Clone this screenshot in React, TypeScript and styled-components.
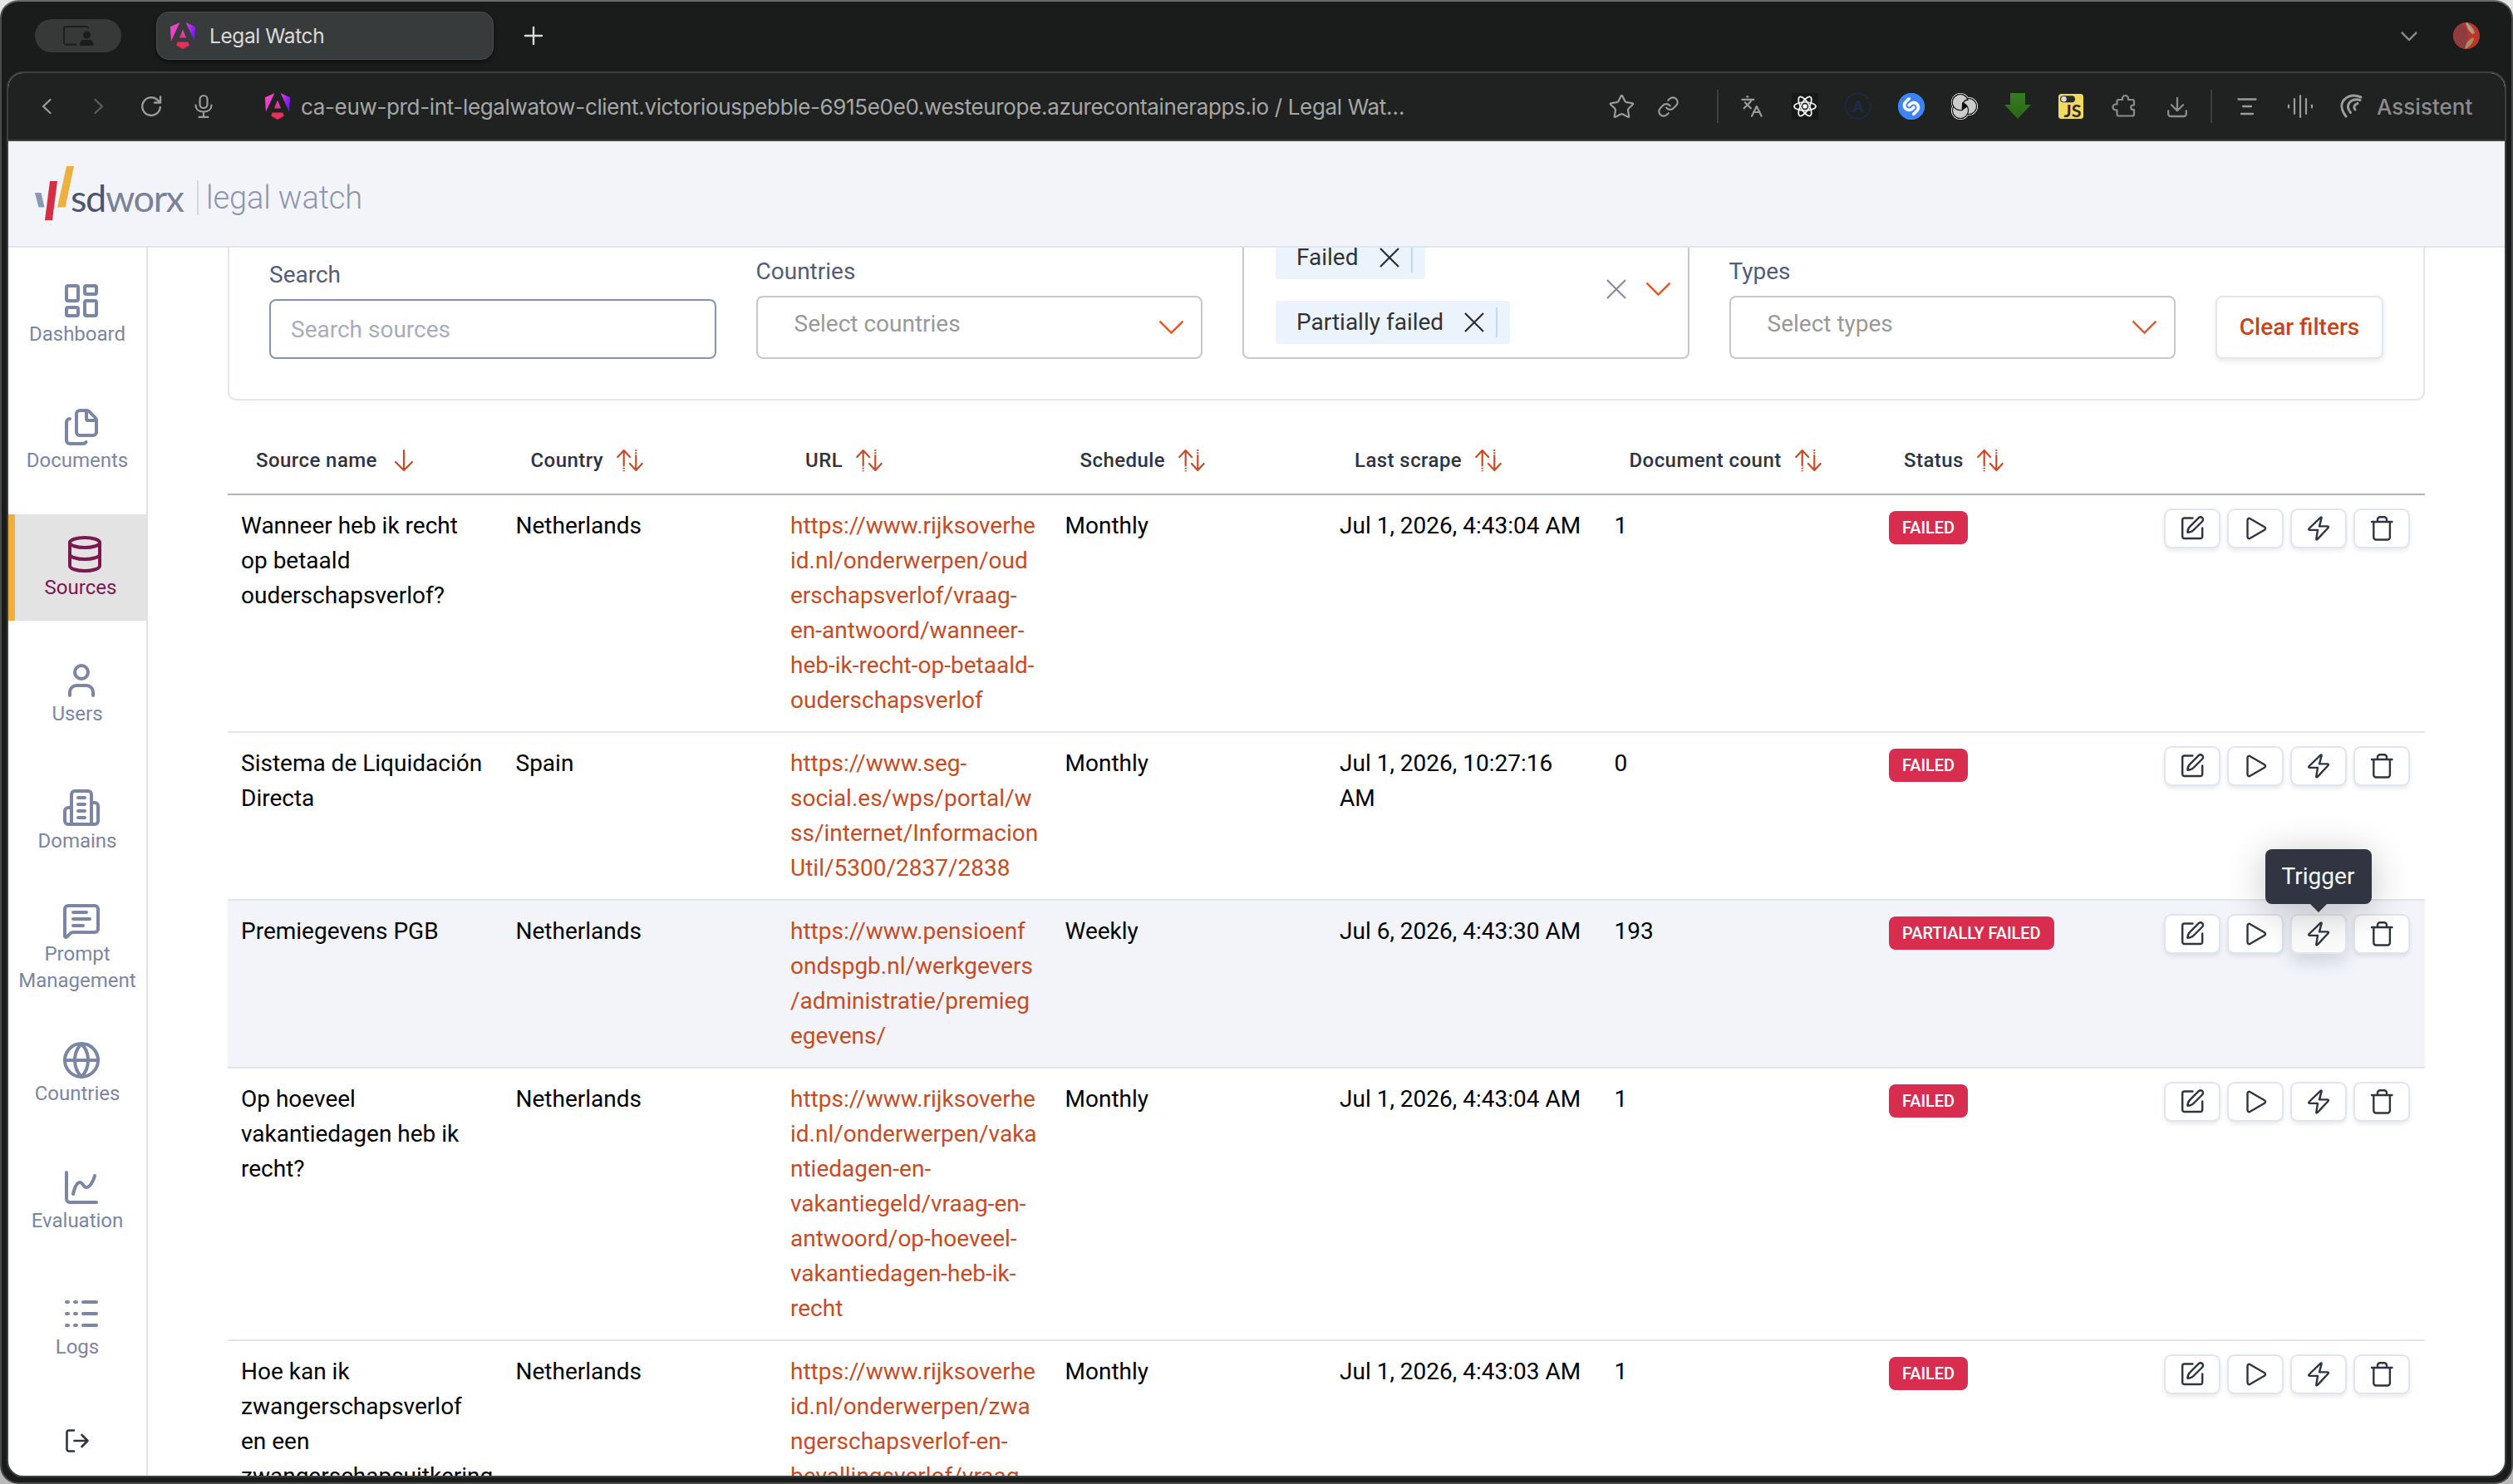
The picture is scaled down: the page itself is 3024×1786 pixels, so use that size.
import type { ReactNode } from "react";
import styled, { createGlobalStyle } from "styled-components";
import {
    ChartSpline,
    Database,
    Files,
    Globe,
    Languages,
    LayoutDashboard,
    Link as LinkIcon,
    Logs,
    MessageSquareText,
    Star,
    User,
} from "lucide-react";
import { SiShazam } from "react-icons/si";

const GlobalStyle = createGlobalStyle`
    * {
        box-sizing: border-box;
    }

    body {
        margin: 0;
        background: linear-gradient(#e4e6e5, #b9b9b9);
        font-family: Roboto, "Liberation Sans", sans-serif;
        font-size: 28px;
        line-height: 42px;
        color: #000;
    }
`;

/* ---------- Browser window ---------- */

const BrowserWindow = styled.div`
    width: 3024px;
    height: 1786px;
    display: flex;
    flex-direction: column;
    overflow: hidden;
    background: #1a1c1b;
    border: 2px solid #4a4c4b;
    border-top-color: #686b6a;
    border-radius: 22px;
    font-family: Inter, "Liberation Sans", sans-serif;
`;

const TabStrip = styled.div`
    flex: none;
    height: 84px;
    padding: 0 38px 2px 40px;
    display: flex;
    align-items: center;
`;

const ProfilePill = styled.div`
    width: 104px;
    height: 40px;
    border-radius: 20px;
    background: #373939;
    display: flex;
    align-items: center;
    justify-content: center;
`;

const Tab = styled.div`
    width: 406px;
    height: 58px;
    margin: 0 36px 0 42px;
    padding-left: 15px;
    display: flex;
    align-items: center;
    gap: 16px;
    border: 1px solid #4b4e4f;
    border-radius: 15px;
    background: #383b3c;
    box-shadow: 0 2px 5px rgba(0, 0, 0, 0.5);
    color: #d9dad9;
    font-size: 24.5px;
    letter-spacing: -0.4px;
`;

const StripEnd = styled.div`
    margin-left: auto;
    display: flex;
    align-items: center;
    gap: 43px;
`;

const Frame = styled.div`
    flex: 1;
    min-height: 0;
    margin: 0 6px 6px;
    display: flex;
    flex-direction: column;
    overflow: hidden;
    border: 2px solid #3e4040;
    border-radius: 20px;
    background: #fff;
`;

const Toolbar = styled.div`
    flex: none;
    height: 82px;
    padding: 0 38px 0 14px;
    display: flex;
    align-items: center;
    background: #202221;
    border-bottom: 2px solid #414244;
    color: #a5a7a6;
    font-size: 26px;
`;

const IconCell = styled.div<{ $width: number; $color?: string }>`
    flex: none;
    width: ${({ $width }) => $width}px;
    display: flex;
    align-items: center;
    justify-content: center;
    color: ${({ $color }) => $color ?? "#9a9c9b"};
`;

const Address = styled.div`
    margin-left: 42px;
    margin-right: auto;
    display: flex;
    align-items: center;
    gap: 12px;
    white-space: nowrap;
`;

const AddressText = styled.span`
    padding-top: 2px;
    letter-spacing: -0.35px;
`;

const ToolDivider = styled.div<{ $before: number; $after: number }>`
    width: 2px;
    height: 40px;
    margin-left: ${({ $before }) => $before}px;
    margin-right: ${({ $after }) => $after}px;
    background: #3d3f3f;
`;

const AssistLabel = styled.span`
    width: 116px;
    padding-top: 2px;
    color: #8b8d8c;
    font-weight: 500;
    white-space: nowrap;
`;

/* ---------- App shell ---------- */

const Page = styled.div`
    flex: 1;
    min-height: 0;
    display: flex;
    flex-direction: column;
    font-family: Roboto, "Liberation Sans", sans-serif;
`;

const Header = styled.header`
    flex: none;
    height: 128px;
    padding-left: 32px;
    display: flex;
    align-items: center;
    background: #f2f4f9;
    border-bottom: 2px solid #e1e5ec;
`;

const Brand = styled.div`
    display: flex;
    align-items: center;
    margin-top: 9px;
`;

const BrandName = styled.span`
    width: 137px;
    margin-left: -5px;
    font-family: Lato, "Liberation Sans", sans-serif;
    font-size: 45px;
    letter-spacing: -1.4px;
    color: #7b8196;
`;

const BrandStrong = styled.span`
    color: #4d546e;
`;

const BrandProduct = styled.span`
    margin-left: 15px;
    padding-left: 9px;
    border-left: 2px solid #d6d8da;
    font-size: 38px;
    font-weight: 300;
    color: #8f95a9;
    letter-spacing: -0.1px;
`;

const Body = styled.div`
    flex: 1;
    min-height: 0;
    display: flex;
`;

const Sidebar = styled.nav`
    flex: none;
    width: 168px;
    padding-top: 16px;
    display: flex;
    flex-direction: column;
    gap: 24.4px;
    border-right: 2px solid #e3e3e3;
    overflow: hidden;
`;

const NavItem = styled.a<{ $active?: boolean }>`
    flex: none;
    height: 128px;
    display: flex;
    flex-direction: column;
    align-items: center;
    justify-content: center;
    border-left: ${({ $active }) => ($active ? "8px solid #eeaf3f" : "none")};
    background: ${({ $active }) => ($active ? "#e3e3e3" : "transparent")};
    color: ${({ $active }) => ($active ? "#7c1750" : "#7a86a4")};
    font-size: 24px;
    line-height: 32px;
    text-align: center;

    svg {
        margin-left: 10px;
    }
`;

const Logout = styled.div`
    margin-top: 32px;
    display: flex;
    justify-content: center;
`;

const Main = styled.main`
    flex: 1;
    min-width: 0;
    padding: 0 96px;
    overflow: hidden;
`;

/* ---------- Filters ---------- */

const FilterPanel = styled.section`
    height: 184px;
    padding: 0 48px 48px;
    display: grid;
    grid-template-columns: repeat(4, minmax(0, 1fr)) 202px;
    align-items: end;
    align-content: end;
    column-gap: 48px;
    overflow: hidden;
    border: 2px solid #e1e5ec;
    border-top: none;
    border-radius: 0 0 10px 10px;
`;

const Field = styled.div`
    display: flex;
    flex-direction: column;
    gap: 8px;
    color: #545c78;
`;

const SearchBox = styled.div`
    height: 72px;
    padding: 1px 0 0 24px;
    display: flex;
    align-items: center;
    border: 2px solid #8593b2;
    border-radius: 8px;
    color: #a8adbc;
`;

const SelectBox = styled.div`
    height: 76px;
    padding: 0 20px 0 44px;
    display: flex;
    align-items: center;
    justify-content: space-between;
    border: 2px solid #c8c8c8;
    border-radius: 8px;
    color: #999;
`;

const SelectHint = styled.span`
    margin-bottom: 8px;
`;

const MultiSelect = styled.div`
    height: 168px;
    padding: 0 20px 0 38px;
    display: flex;
    align-items: center;
    gap: 23px;
    border: 2px solid #c8c8c8;
    border-radius: 8px;
`;

const ChipList = styled.div`
    flex: 1;
    display: flex;
    flex-direction: column;
    align-items: flex-start;
    gap: 26px;
    padding-top: 2px;
`;

const Chip = styled.div`
    height: 52px;
    padding: 0 15px 0 25px;
    display: flex;
    align-items: center;
    gap: 25px;
    border-radius: 4px;
    background: #ebf3fd;
    color: #333;
`;

const ChipEnd = styled.span`
    height: 36px;
    padding-right: 14px;
    display: flex;
    align-items: center;
    border-right: 2px solid #bcd9f7;
`;

const ClearButton = styled.button`
    height: 76px;
    padding: 0;
    border: 2px solid #e1e5ee;
    border-radius: 8px;
    background: #fff;
    box-shadow: 0 3px 6px rgba(40, 50, 80, 0.1);
    color: #c5451c;
    font: 500 28px/42px Roboto, "Liberation Sans", sans-serif;
    white-space: nowrap;
`;

/* ---------- Table ---------- */

const Table = styled.div`
    margin-top: 32px;
`;

const Columns = styled.div`
    display: grid;
    grid-template-columns: repeat(8, minmax(0, 1fr));
`;

const HeadRow = styled(Columns)`
    height: 82px;
    align-items: center;
    border-bottom: 2px solid #abb3c4;
`;

const HeadCell = styled.div`
    padding-left: 34px;
    display: flex;
    align-items: center;
    gap: 16px;
    color: #2f3441;
    font-size: 24px;
    font-weight: 500;
    letter-spacing: 0.43px;
    white-space: nowrap;
`;

const Row = styled(Columns)<{ $hovered?: boolean }>`
    border-bottom: 2px solid #e1e5ec;
    background: ${({ $hovered }) => ($hovered ? "#f2f4f9" : "transparent")};
`;

const Cell = styled.div<{ $link?: boolean }>`
    padding: 16px;
    white-space: nowrap;
    color: ${({ $link }) => ($link ? "#c84b24" : "#000")};
`;

const Badge = styled.span`
    display: block;
    width: max-content;
    height: 40px;
    margin-top: 3px;
    padding: 0 16px;
    border-radius: 8px;
    background: #d92d4f;
    color: #fff;
    font-size: 20px;
    font-weight: 500;
    line-height: 40px;
    letter-spacing: -0.05px;
`;

const Actions = styled.div`
    display: flex;
    gap: 8px;
`;

const ActionButton = styled.div<{ $hovered?: boolean }>`
    position: relative;
    width: 68px;
    height: 48px;
    display: flex;
    align-items: center;
    justify-content: center;
    border: 2px solid #e1e5ee;
    border-radius: 9px;
    background: ${({ $hovered }) => ($hovered ? "#fbfbfc" : "#fff")};
    box-shadow: ${({ $hovered }) =>
        $hovered ? "0 10px 20px rgba(40, 50, 80, 0.16)" : "0 3px 5px rgba(40, 50, 80, 0.1)"};
    color: #2f3441;
`;

const Tooltip = styled.div`
    position: absolute;
    z-index: 2;
    bottom: 58px;
    left: 50%;
    transform: translateX(-50%);
    width: 128px;
    height: 66px;
    border-radius: 8px;
    background: #313541;
    box-shadow: 0 8px 48px rgba(0, 0, 0, 0.24);
    color: #fff;
    line-height: 66px;
    text-align: center;

    &::after {
        content: "";
        position: absolute;
        top: 100%;
        left: 54px;
        border: 10px solid transparent;
        border-top-color: #313541;
    }
`;

/* ---------- Icons ---------- */

interface StrokeProps {
    width?: number;
    height?: number;
    stroke?: number;
    color?: string;
    children: ReactNode;
}

const Stroke = ({ width = 32, height = 32, stroke = 2.4, color = "currentColor", children }: StrokeProps) => (
    <svg
        width={width}
        height={height}
        viewBox={`0 0 ${width} ${height}`}
        fill="none"
        stroke={color}
        strokeWidth={stroke}
        strokeLinecap="round"
        strokeLinejoin="round"
    >
        {children}
    </svg>
);

const AngularLogo = ({ id }: { id: string }) => (
    <svg width="32" height="32" viewBox="0 0 24 24">
        <defs>
            <linearGradient id={`${id}-top`} gradientUnits="userSpaceOnUse" x1="2" y1="6" x2="23" y2="14">
                <stop offset="0" stopColor="#f044c4" />
                <stop offset="0.5" stopColor="#d93adf" />
                <stop offset="1" stopColor="#5f14f2" />
            </linearGradient>
            <linearGradient id={`${id}-low`} gradientUnits="userSpaceOnUse" x1="8" y1="24" x2="15" y2="8">
                <stop offset="0" stopColor="#f02e3c" />
                <stop offset="0.5" stopColor="#e0316f" />
                <stop offset="1" stopColor="#e83ccf" />
            </linearGradient>
        </defs>
        <path
            fill={`url(#${id}-top)`}
            d="M14.692 0l7.832 16.855.814-12.856L14.692 0ZM9.308 0 .662 3.999l.814 12.856L9.308 0Z"
        />
        <path
            fill={`url(#${id}-low)`}
            d="M16.712 17.711H7.288l-1.204 2.916L12 24l5.916-3.373-1.204-2.916ZM8.903 13.93h6.198L12 6.396 8.903 13.93Z"
        />
    </svg>
);

const ProfileIcon = () => (
    <svg width="38" height="26" viewBox="0 0 38 26">
        <path d="M17 23.5H4.5A2.5 2.5 0 0 1 2 21V4.500A2.500 2.500 0 0 1 4.500 2h24A2.500 2.500 0 0 1 31 4.500" fill="none" stroke="#1b1d1c" strokeWidth="1.800" />
        <circle cx="29.500" cy="12" r="4.500" fill="#1b1d1c" />
        <path d="M21 25v-2a5 5 0 0 1 5-5h6.500a5 5 0 0 1 5 5v2z" fill="#1b1d1c" />
    </svg>
);

const Avatar = () => (
    <svg width="32" height="32" viewBox="0 0 32 32">
        <defs>
            <clipPath id="avatar">
                <circle cx="16" cy="16" r="16" />
            </clipPath>
        </defs>
        <g clipPath="url(#avatar)">
            <rect width="32" height="32" fill="#b8362c" />
            <path d="M2 6C8 0 14 2 17 10c2 6-1 14-3 22H4C-1 24-2 12 2 6z" fill="#8f3b40" />
            <path d="M15 0c1 6 4 11 8 14l3-1C25 7 20 2 15 0z" fill="#c98a62" />
            <path d="M16.500 0c2 5 4 9 7 12" stroke="#7fb6b4" strokeWidth="1.600" fill="none" />
            <path d="M14 32c1-7 4-11 10-14l1 2c-2 6-6 10-11 12z" fill="#b98848" />
            <path d="M15.500 31c2-5 4-8 7-11" stroke="#7c9b95" strokeWidth="1.600" fill="none" />
        </g>
    </svg>
);

const SdWorxMark = () => (
    <svg width="48" height="66" viewBox="0 0 48 66">
        <path d="M0 32h7.500l4 17.500h-7z" fill="#8a97b6" />
        <path d="M18 18h9l-6 47h-9z" fill="#d62f45" />
        <path d="M38 0h9L36.500 49.500H27z" fill="#eeb03f" />
    </svg>
);

const MicIcon = () => (
    <Stroke stroke={2.2}>
        <rect x="11.500" y="3" width="9" height="15" rx="4.500" />
        <path d="M6.500 14.500c0 5 4 8 9.500 8s9.500-3 9.500-8M16 22.500v6M10.500 28.800h11" />
    </Stroke>
);

const ReloadIcon = () => (
    <Stroke stroke={2.4}>
        <path d="M26.800 17a10.800 10.800 0 1 1-3.600-9l3.400 3.300" />
        <path d="M27 4.500v7h-7" />
    </Stroke>
);

const ReactIcon = () => (
    <svg width="32" height="32" viewBox="0 0 32 32" fill="none" stroke="#f4f4f4" strokeWidth="1.700">
        <rect width="32" height="32" fill="#171918" stroke="none" />
        <circle cx="16" cy="16" r="2.800" fill="#f4f4f4" stroke="none" />
        <ellipse cx="16" cy="16" rx="13" ry="5" />
        <ellipse cx="16" cy="16" rx="13" ry="5" transform="rotate(60 16 16)" />
        <ellipse cx="16" cy="16" rx="13" ry="5" transform="rotate(120 16 16)" />
    </svg>
);

const ApolloIcon = () => (
    <svg width="32" height="32" viewBox="0 0 32 32">
        <path d="M30 10.500A15.200 15.200 0 1 1 26 4.500" fill="none" stroke="#1b2c4c" strokeWidth="1.400" />
        <circle cx="27" cy="5.500" r="1.700" fill="#1b2c4c" />
        <text x="16" y="23" fontSize="19" fontWeight="700" textAnchor="middle" fill="#1b2c4c">
            A
        </text>
    </svg>
);

const ShazamDisc = styled.span`
    display: flex;
    border-radius: 50%;
    background: radial-gradient(#fff 68%, #3c84f5 69%);
    color: #3c84f5;
`;

const ShazamIcon = () => (
    <ShazamDisc>
        <SiShazam size={32} />
    </ShazamDisc>
);

const TrioIcon = () => (
    <svg width="32" height="32" viewBox="0 0 32 32">
        <g fill="#fff">
            <circle cx="11" cy="11" r="11" />
            <circle cx="21" cy="16" r="11" />
            <circle cx="11" cy="21" r="11" />
        </g>
        <g fill="#cbcbcb" stroke="#1a1a1a" strokeWidth="1.300">
            <circle cx="11" cy="11" r="9.600" />
            <circle cx="21" cy="16" r="9.600" />
            <circle cx="11" cy="21" r="9.600" />
            <path d="M13.500 20.300A9.600 9.600 0 1 1 20 8c-4 0-7.500 4-6.500 12.300z" />
        </g>
        <path d="M13 11v10l7-5z" fill="#0c0c0c" />
    </svg>
);

const GreenArrow = () => (
    <svg width="32" height="32" viewBox="0 0 32 32">
        <defs>
            <linearGradient id="green" x1="0" y1="0" x2="0" y2="1">
                <stop offset="0" stopColor="#367c20" />
                <stop offset="1" stopColor="#2c6418" />
            </linearGradient>
        </defs>
        <path d="M7 0h18v14h7L16 31 0 14h7z" fill="url(#green)" />
    </svg>
);

const JsIcon = () => (
    <svg width="32" height="32" viewBox="0 0 32 32">
        <rect x="1" y="1" width="30" height="30" rx="3.500" fill="#f0db5e" />
        <rect x="3" y="3.300" width="18" height="8" rx="4" fill="#2b2b2b" />
        <circle cx="7.500" cy="7.300" r="3.300" fill="#d9dde0" />
        <text x="7.500" y="28.500" fontSize="20" fontWeight="700" textLength="21" lengthAdjust="spacingAndGlyphs" fill="#2a2a2a" fontFamily="Lato">
            JS
        </text>
    </svg>
);

const PuzzleIcon = () => (
    <Stroke stroke={2.2}>
        <path d="M7.500 13.500V10a2 2 0 0 1 2-2H14V6.500a3.500 3.500 0 0 1 7 0V8h5a2 2 0 0 1 2 2v4.500h-1a2.800 2.800 0 0 0 0 5.600h1V25.500a2 2 0 0 1-2 2H9.500a2 2 0 0 1-2-2v-5H6a3.400 3.400 0 0 1 0-7z" />
    </Stroke>
);

const DownloadIcon = () => (
    <Stroke stroke={2.3}>
        <path d="M16 6v15M9 14.300l7 7 7-7M5.200 21.500V25a3 3 0 0 0 3 3h15.600a3 3 0 0 0 3-3v-3.500" />
    </Stroke>
);

const ReaderIcon = () => (
    <Stroke stroke={2.3}>
        <path d="M5.500 7.500h21M11 16h10M9 25h14" />
    </Stroke>
);

const WaveIcon = () => (
    <Stroke stroke={2.2}>
        <path d="M2 14.500v3M9 7v18M16 3v26M23 7v18M30 14.500v3" />
    </Stroke>
);

const AssistIcon = () => (
    <Stroke stroke={3}>
        <path d="M9 28C3 20 2 12 8 7c5-4.500 12-5 19-2" />
        <path d="M14.500 23.500c-4-5-4-9-1-12.500 3-3 7.500-4 12.500-2.500" />
        <path d="M20 20c-2-3.500-1.500-6 3-7.500" />
    </Stroke>
);

const ChevronDown = ({ width = 31, color = "#df592b" }: { width?: number; color?: string }) => (
    <svg width={width} height={width * 0.55} viewBox="0 0 31 17" fill="none" stroke={color} strokeWidth={width < 31 ? 3.8 : 2.5}>
        <path d="M1.500 1.500l14 14 14-14" />
    </svg>
);

const Cross = ({ color = "#2d2d2d" }: { color?: string }) => (
    <svg width="24" height="24" viewBox="0 0 24 24" stroke={color} strokeWidth="2.200">
        <path d="M1 1l22 22M23 1L1 23" />
    </svg>
);

const BuildingIcon = ({ size = 48 }: { size?: number }) => (
    <svg width={size} height={size} viewBox="0 0 24 24" fill="none" stroke="currentColor" strokeWidth="2" strokeLinecap="round" strokeLinejoin="round">
        <path d="M6 22V4a2 2 0 0 1 2-2h8a2 2 0 0 1 2 2v18Z" />
        <path d="M6 12H4a2 2 0 0 0-2 2v6a2 2 0 0 0 2 2h2" />
        <path d="M18 9h2a2 2 0 0 1 2 2v9a2 2 0 0 1-2 2h-2" />
        <path d="M10 6h4M10 10h4M10 14h4M10 18h4" />
    </svg>
);

const SortDown = () => (
    <Stroke stroke={2.2} color="#c84b24">
        <path d="M16 4v23.500M6 18l10 10 10-10" />
    </Stroke>
);

const SortBoth = () => (
    <Stroke stroke={2.2} color="#c84b24">
        <path d="M8.700 22.500V4M1.300 12l7.400-8 7.400 8" />
        <path d="M8.700 24.700v4.500" strokeDasharray="1.800 1.500" strokeLinecap="butt" />
        <path d="M23.300 10v18M15.900 20l7.400 8 7.400-8" />
        <path d="M23.300 3v5.500" strokeDasharray="1.800 1.500" strokeLinecap="butt" />
    </Stroke>
);

const EditIcon = () => (
    <Stroke stroke={2.4}>
        <path d="M16.500 3.500H6.500a2.300 2.300 0 0 0-2.300 2.300v19.900A2.300 2.300 0 0 0 6.500 28h19.400a2.300 2.300 0 0 0 2.300-2.300V15.500" />
        <path d="M10.500 20.800c-.2-3 .8-5.200 2.800-7.200L23.800 3.200a3 3 0 0 1 4.300 4.300L17.500 18c-2 2-4 2.800-7 2.800z" />
    </Stroke>
);

const PlayIcon = () => (
    <Stroke stroke={2.4}>
        <path d="M6.500 6v20c0 1.800 1.700 2.700 3.200 1.800L27 17.700c1.400-.8 1.400-2.600 0-3.400L9.700 4.200C8.200 3.300 6.500 4.200 6.500 6z" />
    </Stroke>
);

const BoltIcon = () => (
    <Stroke stroke={2.4}>
        <path d="M18.600 2.700 4.700 16c-.9.900-.5 1.900.8 1.900H15l-1.700 10.500c-.1 1 .7 1.300 1.400.6L27.500 15.200c.8-.9.400-1.800-.8-1.800H17l2.600-10c.2-1-.4-1.300-1-.7z" />
    </Stroke>
);

const TrashIcon = () => (
    <Stroke stroke={2.4}>
        <path d="M4 8h24.500M11 7.500V5.300a3 3 0 0 1 3-3h5a3 3 0 0 1 3 3v2.200M6.300 8v18.700a2.800 2.800 0 0 0 2.800 2.800h14a2.800 2.800 0 0 0 2.800-2.800V8" />
    </Stroke>
);

const LogoutIcon = () => (
    <Stroke stroke={2.6} color="#2f3441">
        <path d="M12 3.500H6a2.500 2.500 0 0 0-2.500 2.500v20A2.500 2.500 0 0 0 6 28.500h6M12.500 16h16M21.500 9l7 7-7 7" />
    </Stroke>
);

/* ---------- Data ---------- */

const navItems = [
    { label: ["Dashboard"], icon: LayoutDashboard },
    { label: ["Documents"], icon: Files },
    { label: ["Sources"], icon: Database, active: true },
    { label: ["Users"], icon: User },
    { label: ["Domains"], icon: BuildingIcon },
    { label: ["Prompt", "Management"], icon: MessageSquareText },
    { label: ["Countries"], icon: Globe },
    { label: ["Evaluation"], icon: ChartSpline },
    { label: ["Logs"], icon: Logs },
];

const extensions = [ReactIcon, ApolloIcon, ShazamIcon, TrioIcon, GreenArrow, JsIcon, PuzzleIcon, DownloadIcon];

const headings = ["Source name", "Country", "URL", "Schedule", "Last scrape", "Document count", "Status"];

interface Source {
    name: string[];
    country: string;
    url: string[];
    schedule: string;
    lastScrape: string[];
    count: number;
    status: string;
    hovered?: boolean;
}

const sources: Source[] = [
    {
        name: ["Wanneer heb ik recht", "op betaald", "ouderschapsverlof?"],
        country: "Netherlands",
        url: [
            "https://www.rijksoverhe",
            "id.nl/onderwerpen/oud",
            "erschapsverlof/vraag-",
            "en-antwoord/wanneer-",
            "heb-ik-recht-op-betaald-",
            "ouderschapsverlof",
        ],
        schedule: "Monthly",
        lastScrape: ["Jul 1, 2026, 4:43:04 AM"],
        count: 1,
        status: "FAILED",
    },
    {
        name: ["Sistema de Liquidación", "Directa"],
        country: "Spain",
        url: ["https://www.seg-", "social.es/wps/portal/w", "ss/internet/Informacion", "Util/5300/2837/2838"],
        schedule: "Monthly",
        lastScrape: ["Jul 1, 2026, 10:27:16", "AM"],
        count: 0,
        status: "FAILED",
    },
    {
        name: ["Premiegevens PGB"],
        country: "Netherlands",
        url: ["https://www.pensioenf", "ondspgb.nl/werkgevers", "/administratie/premieg", "egevens/"],
        schedule: "Weekly",
        lastScrape: ["Jul 6, 2026, 4:43:30 AM"],
        count: 193,
        status: "PARTIALLY FAILED",
        hovered: true,
    },
    {
        name: ["Op hoeveel", "vakantiedagen heb ik", "recht?"],
        country: "Netherlands",
        url: [
            "https://www.rijksoverhe",
            "id.nl/onderwerpen/vaka",
            "ntiedagen-en-",
            "vakantiegeld/vraag-en-",
            "antwoord/op-hoeveel-",
            "vakantiedagen-heb-ik-",
            "recht",
        ],
        schedule: "Monthly",
        lastScrape: ["Jul 1, 2026, 4:43:04 AM"],
        count: 1,
        status: "FAILED",
    },
    {
        name: ["Hoe kan ik", "zwangerschapsverlof", "en een", "zwangerschapsuitkering"],
        country: "Netherlands",
        url: ["https://www.rijksoverhe", "id.nl/onderwerpen/zwa", "ngerschapsverlof-en-", "bevallingsverlof/vraag-"],
        schedule: "Monthly",
        lastScrape: ["Jul 1, 2026, 4:43:03 AM"],
        count: 1,
        status: "FAILED",
    },
];

const Lines = ({ lines }: { lines: string[] }) => (
    <>
        {lines.map((line) => (
            <div key={line}>{line}</div>
        ))}
    </>
);

export default function App() {
    return (
        <>
            <GlobalStyle />
            <BrowserWindow>
                <TabStrip>
                    <ProfilePill>
                        <ProfileIcon />
                    </ProfilePill>
                    <Tab>
                        <AngularLogo id="tab" />
                        Legal Watch
                    </Tab>
                    <Stroke width={24} height={24} stroke={2.4} color="#d9dad9">
                        <path d="M12 2v20M2 12h20" />
                    </Stroke>
                    <StripEnd>
                        <ChevronDown width={20} color="#8b8d8c" />
                        <Avatar />
                    </StripEnd>
                </TabStrip>

                <Frame>
                    <Toolbar>
                        <IconCell $width={63}>
                            <Stroke width={14} height={22}>
                                <path d="M11.500 3 3 11l8.500 8" />
                            </Stroke>
                        </IconCell>
                        <IconCell $width={63} $color="#5a5c5b">
                            <Stroke width={14} height={22}>
                                <path d="M2.500 3 11 11l-8.500 8" />
                            </Stroke>
                        </IconCell>
                        <IconCell $width={63}>
                            <ReloadIcon />
                        </IconCell>
                        <IconCell $width={63}>
                            <MicIcon />
                        </IconCell>
                        <Address>
                            <AngularLogo id="address" />
                            <AddressText>
                                ca-euw-prd-int-legalwatow-client.victoriouspebble-6915e0e0.westeurope.azurecontainerapps.io / Legal Wat…
                            </AddressText>
                        </Address>
                        <IconCell $width={56}>
                            <Star size={33} strokeWidth={1.6} />
                        </IconCell>
                        <IconCell $width={56}>
                            <LinkIcon size={27} strokeWidth={1.9} />
                        </IconCell>
                        <ToolDivider $before={31} $after={8} />
                        <IconCell $width={64}>
                            <Languages size={28} strokeWidth={1.9} />
                        </IconCell>
                        {extensions.map((Extension, i) => (
                            <IconCell key={i} $width={64} $color="#8b8d8c">
                                <Extension />
                            </IconCell>
                        ))}
                        <ToolDivider $before={8} $after={10} />
                        <IconCell $width={64}>
                            <ReaderIcon />
                        </IconCell>
                        <IconCell $width={64}>
                            <WaveIcon />
                        </IconCell>
                        <IconCell $width={60}>
                            <AssistIcon />
                        </IconCell>
                        <AssistLabel>Assistent</AssistLabel>
                    </Toolbar>

                    <Page>
                        <Header>
                            <SdWorxMark />
                            <Brand>
                                <BrandName>
                                    <BrandStrong>sd</BrandStrong>worx
                                </BrandName>
                                <BrandProduct>legal watch</BrandProduct>
                            </Brand>
                        </Header>

                        <Body>
                            <Sidebar>
                                {navItems.map(({ label, icon: Icon, active }) => (
                                    <NavItem key={label[0]} $active={active}>
                                        <Icon size={48} />
                                        <Lines lines={label} />
                                    </NavItem>
                                ))}
                                <Logout>
                                    <LogoutIcon />
                                </Logout>
                            </Sidebar>

                            <Main>
                                <FilterPanel>
                                    <Field>
                                        Search
                                        <SearchBox>Search sources</SearchBox>
                                    </Field>
                                    <Field>
                                        Countries
                                        <SelectBox>
                                            <SelectHint>Select countries</SelectHint>
                                            <ChevronDown />
                                        </SelectBox>
                                    </Field>
                                    <MultiSelect>
                                        <ChipList>
                                            {["Failed", "Partially failed"].map((status) => (
                                                <Chip key={status}>
                                                    {status}
                                                    <ChipEnd>
                                                        <Cross />
                                                    </ChipEnd>
                                                </Chip>
                                            ))}
                                        </ChipList>
                                        <Cross color="#858ca3" />
                                        <ChevronDown />
                                    </MultiSelect>
                                    <Field>
                                        Types
                                        <SelectBox>
                                            <SelectHint>Select types</SelectHint>
                                            <ChevronDown />
                                        </SelectBox>
                                    </Field>
                                    <ClearButton>Clear filters</ClearButton>
                                </FilterPanel>

                                <Table>
                                    <HeadRow>
                                        {headings.map((heading, i) => (
                                            <HeadCell key={heading}>
                                                {heading}
                                                {i === 0 ? <SortDown /> : <SortBoth />}
                                            </HeadCell>
                                        ))}
                                    </HeadRow>
                                    {sources.map((source) => (
                                        <Row key={source.name[0]} $hovered={source.hovered}>
                                            <Cell>
                                                <Lines lines={source.name} />
                                            </Cell>
                                            <Cell>{source.country}</Cell>
                                            <Cell $link>
                                                <Lines lines={source.url} />
                                            </Cell>
                                            <Cell>{source.schedule}</Cell>
                                            <Cell>
                                                <Lines lines={source.lastScrape} />
                                            </Cell>
                                            <Cell>{source.count}</Cell>
                                            <Cell>
                                                <Badge>{source.status}</Badge>
                                            </Cell>
                                            <Cell>
                                                <Actions>
                                                    <ActionButton>
                                                        <EditIcon />
                                                    </ActionButton>
                                                    <ActionButton>
                                                        <PlayIcon />
                                                    </ActionButton>
                                                    <ActionButton $hovered={source.hovered}>
                                                        <BoltIcon />
                                                        {source.hovered && <Tooltip>Trigger</Tooltip>}
                                                    </ActionButton>
                                                    <ActionButton>
                                                        <TrashIcon />
                                                    </ActionButton>
                                                </Actions>
                                            </Cell>
                                        </Row>
                                    ))}
                                </Table>
                            </Main>
                        </Body>
                    </Page>
                </Frame>
            </BrowserWindow>
        </>
    );
}
